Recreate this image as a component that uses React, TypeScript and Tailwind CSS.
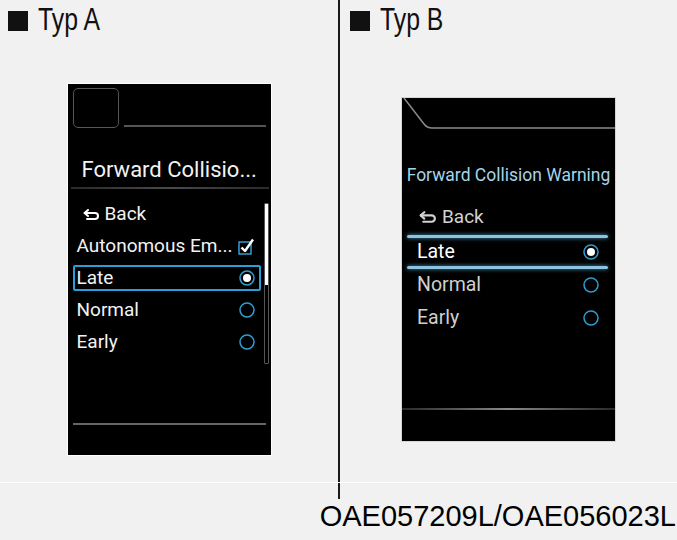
import React from "react";

const BackArrow = ({ w = 17, h = 11, color = "#fff" }: { w?: number; h?: number; color?: string }) => (
  <svg width={w} height={h} viewBox="0 0 17 11" fill="none">
    <path d="M5 1 L1.5 4 L5 7" stroke={color} strokeWidth="2" strokeLinejoin="round" strokeLinecap="round" />
    <path d="M2 4 H12 A3 3 0 0 1 12 10 H4" stroke={color} strokeWidth="2" strokeLinecap="round" />
  </svg>
);

const Radio = ({ on, color = "#2f9fd3" }: { on?: boolean; color?: string }) => (
  <svg width="16" height="16" viewBox="0 0 16 16">
    <circle cx="8" cy="8" r="7" fill="none" stroke={color} strokeWidth="1.5" />
    {on && <circle cx="8" cy="8" r="4" fill="#fff" />}
  </svg>
);

const Check = () => (
  <svg width="17" height="17" viewBox="0 0 17 17">
    <rect x="1" y="4" width="12" height="12" fill="none" stroke="#2f9fd3" strokeWidth="1.5" />
    <path d="M3.5 9.5 L7 13 L15 1.5" fill="none" stroke="#fff" strokeWidth="2.4" strokeLinejoin="round" />
  </svg>
);

const Header = ({ label, className }: { label: string; className: string }) => (
  <div className={`flex items-center pt-[4px] font-['Liberation_Sans',sans-serif] text-[31px] leading-none text-[#111] ${className}`}>
    <span className="w-[20px] h-[20px] bg-[#111] mt-[3px]" />
    <span className="ml-[10px] inline-block origin-left scale-x-[0.8]">{label}</span>
  </div>
);

const rowsA = [
  { label: "Autonomous Em...", kind: "check" },
  { label: "Late", kind: "radio", on: true, sel: true },
  { label: "Normal", kind: "radio" },
  { label: "Early", kind: "radio" },
];

const ScreenA = () => (
  <div className="w-[205px] h-[373px] bg-black border border-white flex flex-col font-[Roboto] text-[#f2f2f2]">
    <div className="flex items-end mt-[4px]">
      <div className="ml-[5px] w-[46px] h-[40px] border-[1.5px] border-[#555] rounded-[5px]" />
      <div className="flex-1 h-[2px] bg-[#555] ml-[5px] mr-[5px] mb-[1px]" />
    </div>
    <div className="mt-[30px] pl-[14px] text-[22px] leading-[24px]">Forward Collisio...</div>
    <div className="mt-[5px] ml-[3px] w-[198px] h-[2px] bg-linear-to-r from-[#2a2a2a] via-[#4a4a4a] to-[#2a2a2a]" />
    <div className="flex h-[168px] mt-[7px]">
      <div className="ml-[5px] mt-[2px] w-[188px] flex flex-col text-[19px]">
        <div className="h-[32px] flex items-center gap-[5px] pl-[10px]">
          <BackArrow />
          <span>Back</span>
        </div>
        {rowsA.map((r) => (
          <div key={r.label} className="h-[32px] flex items-center">
            <div
              className={`w-full h-[26px] flex items-center justify-between pl-[2px] pr-[4px] border-2 rounded-[2px] ${
                r.sel ? "border-[#2a9ed8]" : "border-transparent"
              }`}
            >
              <span>{r.label}</span>
              {r.kind === "check" ? <Check /> : <Radio on={r.on} />}
            </div>
          </div>
        ))}
      </div>
      <div className="ml-[3px] mt-[7px] w-[5px] h-[161px] border border-[#555] rounded-[1px] flex flex-col">
        <div className="h-[81px] bg-white" />
      </div>
    </div>
    <div className="mt-[59px] ml-[5px] w-[193px] h-[2px] bg-[#666]" />
  </div>
);

const ScreenB = () => (
  <div className="w-[215px] h-[345px] bg-black border border-[#d6d6d6] flex flex-col font-[Roboto]">
    <svg width="213" height="35" viewBox="0 0 213 35" className="block">
      <path d="M2 0 L22 26 Q25 30 30 30 H213" fill="none" stroke="#8a8a8a" strokeWidth="1.5" />
    </svg>
    <div className="mt-[32px] text-center text-[17.5px] leading-[20px] text-[#a6d3ea]">Forward Collision Warning</div>
    <div className="mt-[18px] h-[28px] flex items-center gap-[5px] pl-[17px] text-[19px] text-[#d2d2d2]">
      <BackArrow w={18} h={12} color="#d2d2d2" />
      <span>Back</span>
    </div>
    <div className="mt-[4px] ml-[5px] w-[201px] h-[3px] rounded-full bg-[#8cc3df] shadow-[0_0_4px_#4f9ec8]" />
    <div className="h-[28px] flex items-center justify-between pl-[15px] pr-[16px] text-[19.5px] text-white">
      <span>Late</span>
      <Radio on color="#2d9ccf" />
    </div>
    <div className="ml-[5px] w-[201px] h-[3px] rounded-full bg-[#8cc3df] shadow-[0_0_4px_#4f9ec8]" />
    <div className="h-[32px] flex items-center justify-between pl-[15px] pr-[16px] text-[19.5px] text-[#cfcfcf]">
      <span>Normal</span>
      <Radio color="#2d9ccf" />
    </div>
    <div className="h-[34px] flex items-center justify-between pl-[15px] pr-[16px] text-[19.5px] text-[#cfcfcf]">
      <span>Early</span>
      <Radio color="#2d9ccf" />
    </div>
    <div className="mt-[73px] h-[2px] bg-linear-to-r from-[#2a2a2a] via-[#8a8a8a] to-[#2a2a2a]" />
  </div>
);

export default function App() {
  return (
    <div className="w-[677px] h-[540px] bg-[#f1f1f1] flex flex-col overflow-hidden">
      <div className="flex h-[482px]">
        <div className="w-[338px] flex flex-col">
          <Header label="Typ A" className="pl-[8px]" />
          <div className="mt-[48px] flex justify-center">
            <ScreenA />
          </div>
        </div>
        <div className="w-[2px] bg-[#1a1a1a]" />
        <div className="flex-1 flex flex-col">
          <Header label="Typ B" className="pl-[10px]" />
          <div className="mt-[62px] flex justify-center">
            <ScreenB />
          </div>
        </div>
      </div>
      <div className="h-px bg-white" />
      <div className="flex">
        <div className="w-[338px]" />
        <div className="w-[2px] h-[16px] bg-[#1a1a1a]" />
      </div>
      <div className="mt-[3px] pr-[1px] text-right font-['Liberation_Sans',Arial,sans-serif] text-[29px] leading-none text-black">
        OAE057209L/OAE056023L
      </div>
    </div>
  );
}
